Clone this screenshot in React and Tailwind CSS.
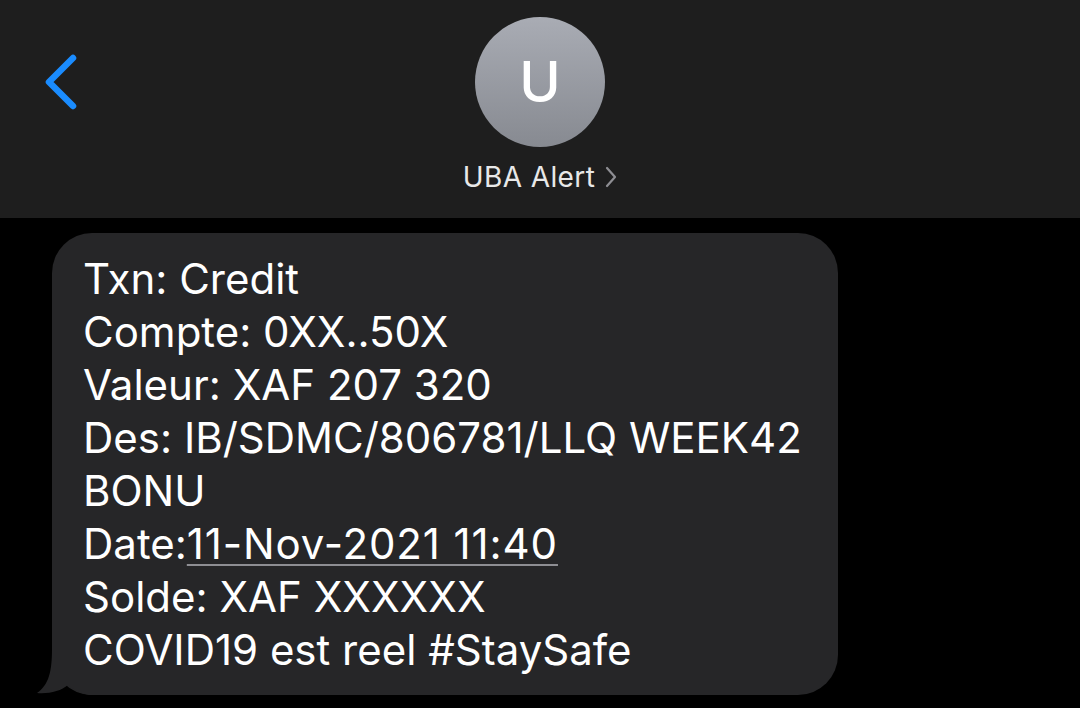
export default function App() {
  const lines = [
    'Txn: Credit',
    'Compte: 0XX..50X',
    'Valeur: XAF 207 320',
    'Des: IB/SDMC/806781/LLQ WEEK42',
    'BONU',
  ];

  return (
    <div
      className="w-[1080px] h-[708px] bg-black overflow-hidden"
      style={{ fontFamily: 'Inter, "Noto Sans", sans-serif' }}
    >
      {/* header */}
      <div className="h-[218px] bg-[#1e1e1e] grid grid-cols-[1fr_auto_1fr]">
        <div className="pl-[42px] pt-[54px]">
          <svg width="36" height="56" viewBox="0 0 36 56" fill="none">
            <path d="M31 4 L7 28 L31 52" stroke="#1a8cff" strokeWidth="6.5" strokeLinecap="round" strokeLinejoin="round" />
          </svg>
        </div>
        <div className="flex flex-col items-center pt-[17px]">
          <div className="w-[130px] h-[130px] rounded-full bg-gradient-to-b from-[#a9acb4] to-[#878a91] flex items-center justify-center">
            <span className="text-white text-[56px] font-medium leading-none">U</span>
          </div>
          <div className="mt-[13px] flex items-center gap-[10px] text-[28px] leading-[34px] text-[#e8e8e8]">
            <span className="tracking-[0.4px]">UBA Alert</span>
            <svg width="12" height="22" viewBox="0 0 12 22" fill="none">
              <path d="M2 2 L10 11 L2 20" stroke="#8e8e93" strokeWidth="2.2" strokeLinecap="round" strokeLinejoin="round" />
            </svg>
          </div>
        </div>
        <div />
      </div>

      {/* message bubble */}
      <div className="relative ml-[52px] mt-[15px] w-[786px] rounded-[40px] bg-[#262628] pl-[31px] pt-[19px] pb-[19px]">
        {/* bubble tail */}
        <svg className="absolute left-[-15px] bottom-0" width="60" height="46" viewBox="0 0 60 46" fill="none">
          <path d="M15 0 C15 22 12 36 0 44 C12 45 24 42 31 36 C38 42 46 45 52 46 L60 46 L60 0 Z" fill="#262628" />
        </svg>
        <div className="relative text-[42px] leading-[53px] text-white">
          {lines.map((l) => (
            <div key={l}>{l}</div>
          ))}
          <div>
            Date:
            <span className="tracking-[0.9px] underline decoration-[#8e8e93] decoration-2 underline-offset-[5px]">11-Nov-2021 11:40</span>
          </div>
          <div>Solde: XAF XXXXXX</div>
          <div>COVID19 est reel #StaySafe</div>
        </div>
      </div>
    </div>
  );
}
